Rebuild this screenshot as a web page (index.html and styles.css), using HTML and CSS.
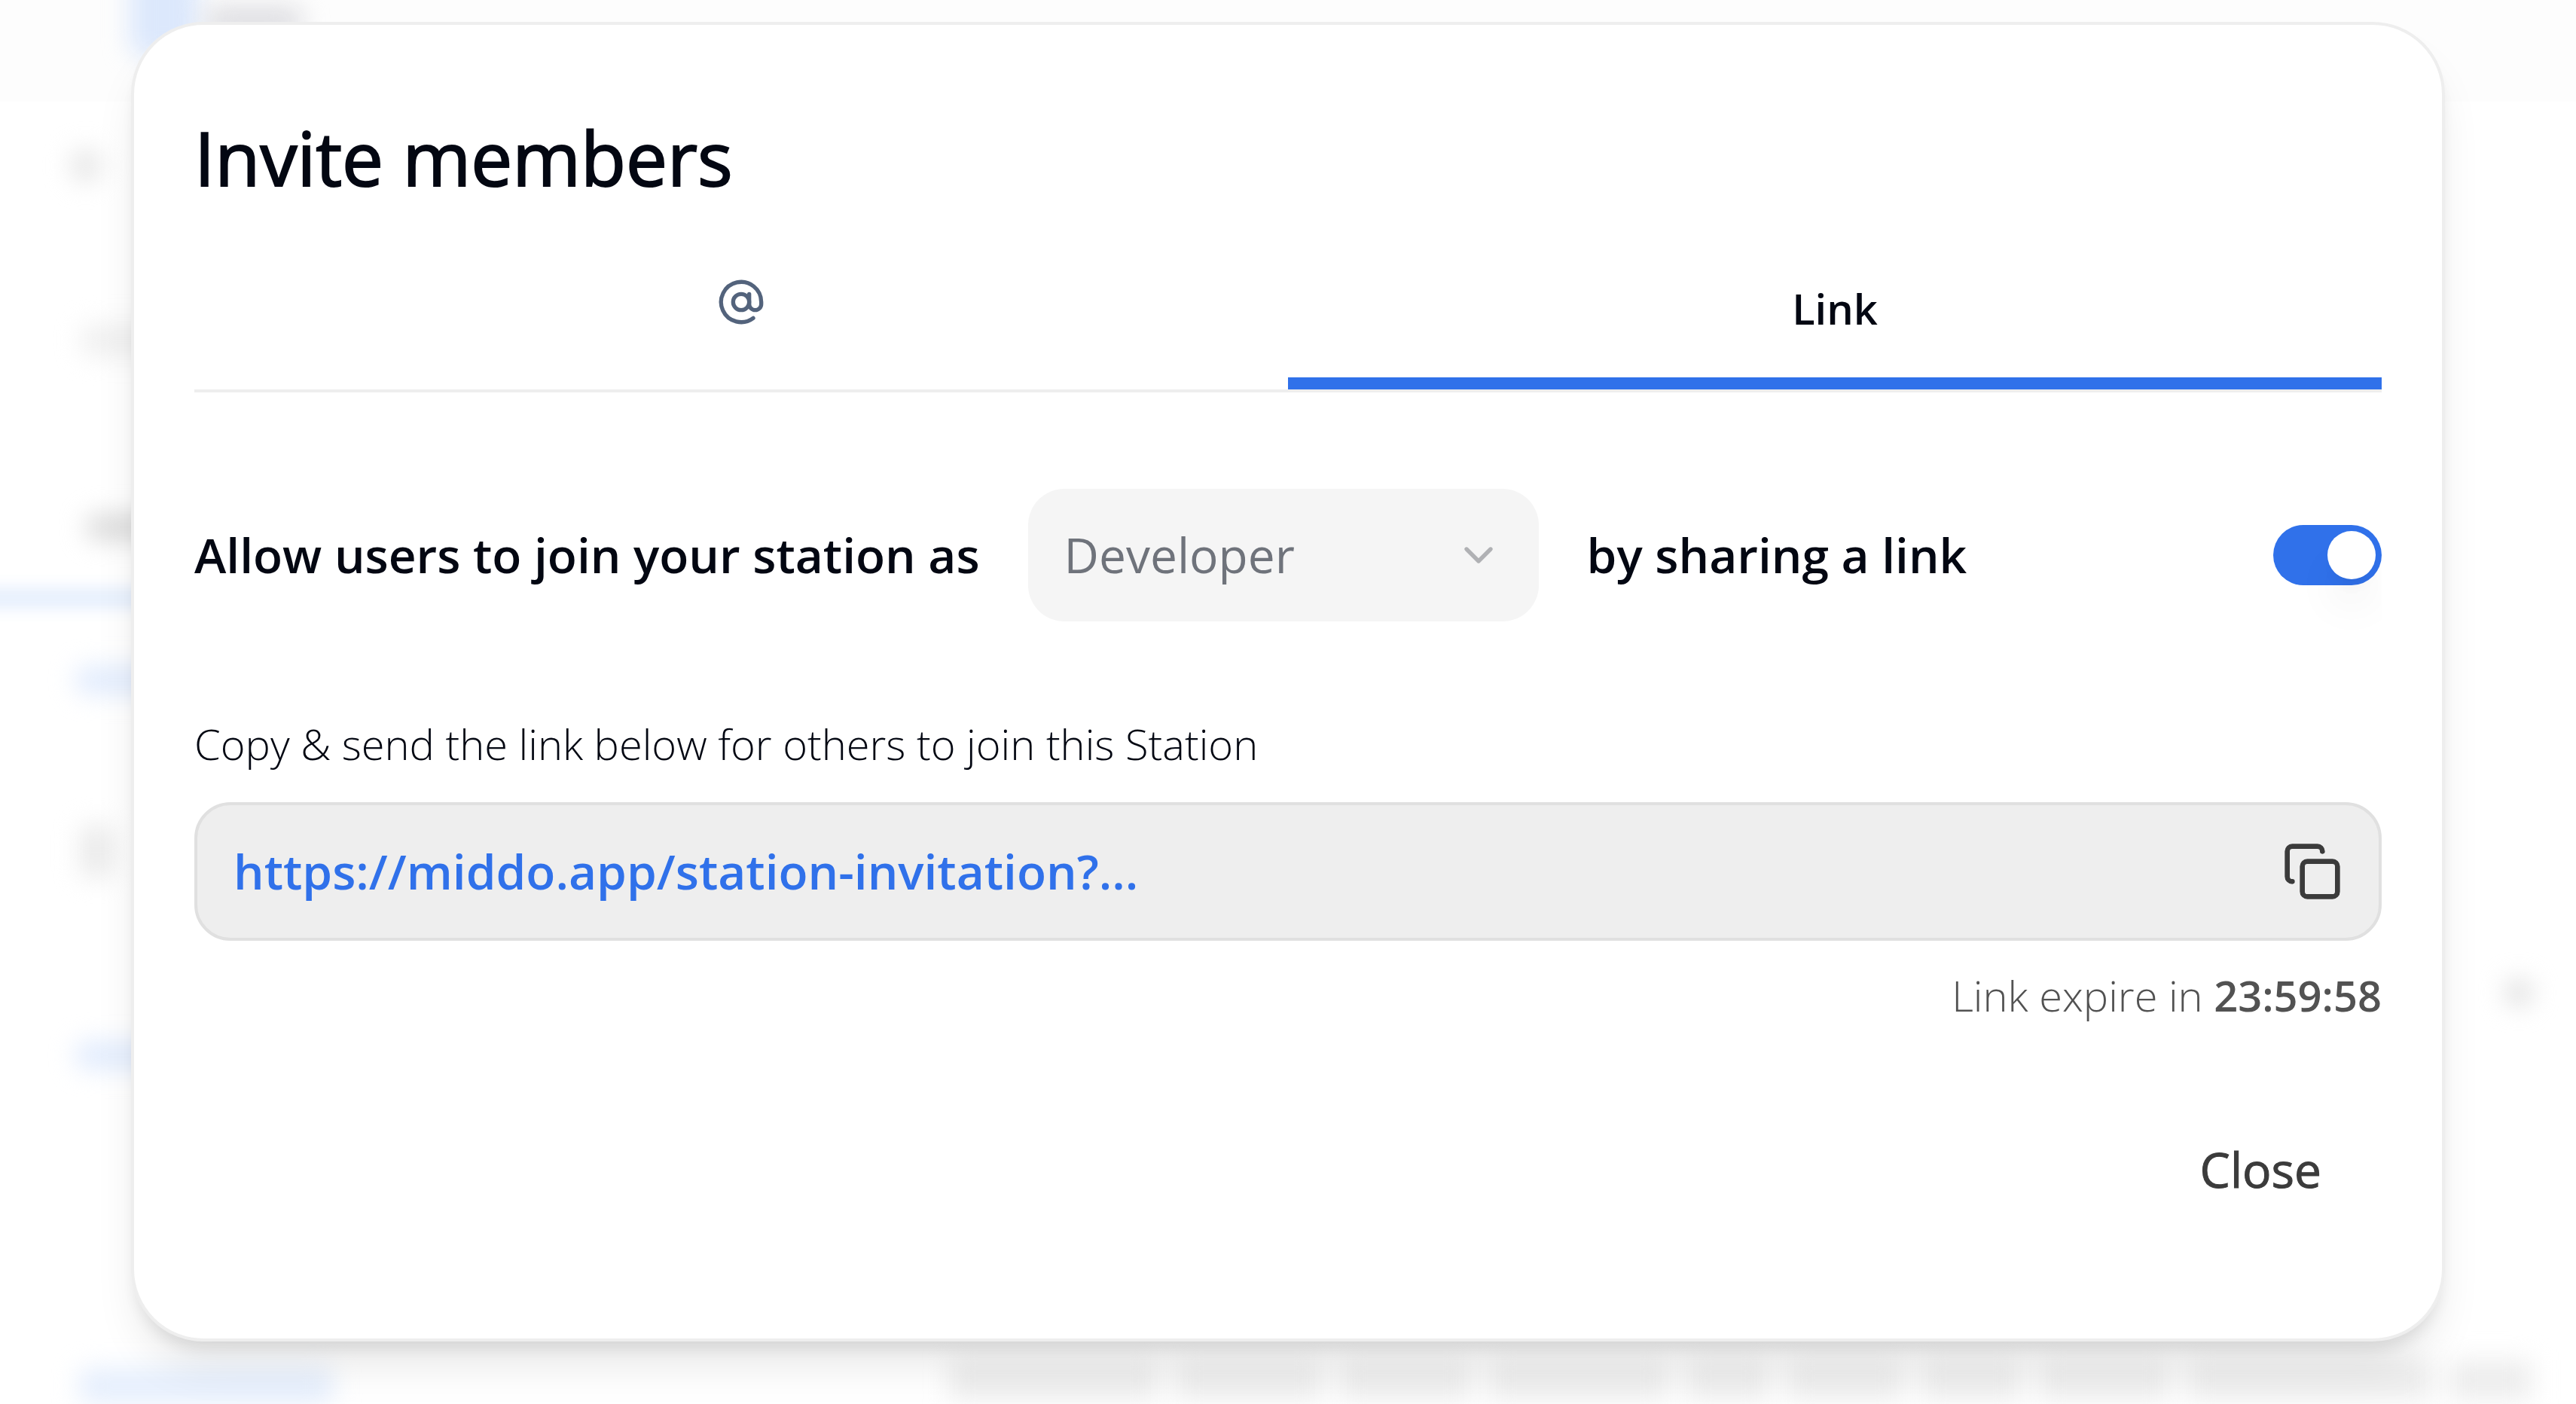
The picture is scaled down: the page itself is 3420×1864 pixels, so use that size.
FILE: index.html
```html
<!DOCTYPE html>
<html lang="en">
<head>
<meta charset="utf-8">
<meta name="viewport" content="width=device-width, initial-scale=1">
<title>Invite members</title>
<link rel="stylesheet" href="styles.css">
</head>
<body>
<div class="backdrop" aria-hidden="true">
  <span class="haze haze-header"></span>
  <span class="haze haze-logo"></span>
  <span class="haze haze-logo-text"></span>
  <span class="haze haze-back"></span>
  <span class="haze haze-search"></span>
  <span class="haze haze-tab"></span>
  <span class="haze haze-tab-line"></span>
  <span class="haze haze-link-1"></span>
  <span class="haze haze-item"></span>
  <span class="haze haze-link-2"></span>
  <span class="haze haze-link-3"></span>
  <span class="haze haze-dot"></span>
  <div class="haze-words">
    <i style="width:279px"></i><i style="width:198px"></i><i style="width:178px"></i><i style="width:242px"></i><i style="width:114px"></i><i style="width:158px"></i><i style="width:136px"></i><i style="width:178px"></i><i style="width:328px"></i><i style="width:110px"></i>
  </div>
</div>
<main class="overlay">
  <section class="dialog" role="dialog" aria-modal="true" aria-labelledby="dialog-title">
    <h1 class="title" id="dialog-title">Invite members</h1>
    <div class="tabs" role="tablist">
      <button class="tab" role="tab" type="button" aria-selected="false" aria-label="Email">
        <svg class="icon" viewBox="0 0 24 24"><circle cx="12" cy="12" r="4"/><path d="M16 8v5a3 3 0 0 0 6 0v-1a10 10 0 1 0-4 8"/></svg>
      </button>
      <button class="tab tab-active" role="tab" type="button" aria-selected="true">Link</button>
    </div>
    <div class="share">
      <label for="role">Allow users to join your station as</label>
      <div class="select">
        <select id="role" disabled><option>Developer</option></select>
        <svg class="icon chevron" viewBox="0 0 24 24"><path d="m6 9 6 6 6-6"/></svg>
      </div>
      <label for="sharing">by sharing a link</label>
      <input class="switch" id="sharing" type="checkbox" role="switch" checked>
    </div>
    <p class="hint">Copy &amp; send the link below for others to join this Station</p>
    <div class="link-box">
      <a class="link" href="#">https://middo.app/station-invitation?...</a>
      <button class="copy" type="button" aria-label="Copy link">
        <svg class="icon icon-copy" viewBox="0 0 24 24"><rect x="8" y="8" width="14" height="14" rx="2"/><path d="M4 16c-1.1 0-2-.9-2-2V4c0-1.1.9-2 2-2h10c1.1 0 2 .9 2 2"/></svg>
      </button>
    </div>
    <p class="expiry">Link expire in <time>23:59:58</time></p>
    <div class="actions">
      <button class="close" type="button">Close</button>
    </div>
  </section>
</main>
</body>
</html>
```
FILE: styles.css
```css
:root {
  --blue: #3071ea;
  --ink: #030712;
  --line: #eeeeee;
}

* { box-sizing: border-box; }

body {
  margin: 0;
  min-height: 100vh;
  background: #fff;
  color: var(--ink);
  font-family: "Open Sans", "Noto Sans", sans-serif;
  font-size: 64px;
  line-height: 96px;
}

button, select { font: inherit; }

button {
  border: 0;
  background: none;
  color: inherit;
  padding: 0;
}

h1, p { margin: 0; }

/* Blurred application behind the dialog */
.backdrop {
  position: fixed;
  inset: 0;
  overflow: hidden;
}

.haze {
  position: absolute;
  border-radius: 16px;
  filter: blur(16px);
}

.haze-header { left: 0; right: 0; top: 0; height: 135px; background: #fdfdfd; border-radius: 0; filter: none; }
.haze-logo { left: 172px; top: -40px; width: 92px; height: 114px; background: #dce8fc; }
.haze-logo-text { left: 272px; top: 8px; width: 130px; height: 40px; background: #dedee2; }
.haze-back { left: 94px; top: 198px; width: 40px; height: 44px; background: #e8e8e8; }
.haze-search { left: 108px; top: 430px; width: 120px; height: 44px; background: #f0f0f0; }
.haze-tab { left: 114px; top: 682px; width: 120px; height: 36px; background: #dcdcdc; }
.haze-tab-line { left: -40px; top: 780px; width: 400px; height: 28px; background: #e6effd; border-radius: 0; filter: blur(10px); }
.haze-link-1 { left: 100px; top: 884px; width: 160px; height: 38px; background: #e2ecfd; }
.haze-item { left: 106px; top: 1094px; width: 46px; height: 72px; background: #ebebeb; }
.haze-link-2 { left: 100px; top: 1382px; width: 160px; height: 38px; background: #e2ecfd; }
.haze-link-3 { left: 104px; top: 1816px; width: 340px; height: 48px; background: #e6effd; }
.haze-dot { left: 3326px; top: 1300px; width: 36px; height: 36px; background: #e0e0e0; }

.haze-words {
  position: absolute;
  left: 1260px;
  top: 1806px;
  display: flex;
  gap: 20px;
  filter: blur(16px);
}

.haze-words i {
  height: 52px;
  background: #ededed;
}

/* Dialog */
.overlay {
  position: relative;
  min-height: 100vh;
  padding: 29px 174px 83px;
}

.dialog {
  padding: 80px;
  border: 4px solid var(--line);
  border-radius: 96px;
  background: #fff;
  box-shadow: 0 40px 60px -12px rgba(0, 0, 0, .1), 0 16px 24px -8px rgba(0, 0, 0, .1);
}

.title {
  padding-top: 32px;
  font-size: 98px;
  font-weight: 500;
  line-height: 128px;
  -webkit-text-stroke: 2px currentColor;
}

.icon {
  display: block;
  width: 64px;
  height: 64px;
  fill: none;
  stroke: currentColor;
  stroke-width: 2;
  stroke-linecap: round;
  stroke-linejoin: round;
}

.tabs {
  display: grid;
  grid-template-columns: 1fr 1fr;
  height: 196px;
  margin-top: 52px;
  border-bottom: 4px solid var(--line);
}

.tab {
  display: flex;
  align-items: center;
  justify-content: center;
  padding-bottom: 40px;
  color: #53637c;
  font-size: 56px;
  font-weight: 600;
  line-height: 80px;
}

.tab-active {
  padding-bottom: 8px;
  border-bottom: 16px solid var(--blue);
  color: var(--ink);
}

.share {
  display: flex;
  align-items: center;
  gap: 64px;
  margin-top: 128px;
  font-weight: 600;
  overflow-x: clip;
}

.select { display: grid; flex: 0 1 678px; align-items: center; }

.select select {
  grid-area: 1 / 1;
  width: 100%;
  height: 176px;
  padding: 0 48px;
  border: 0;
  border-radius: 48px;
  appearance: none;
  background: #f5f5f5;
  color: #6f737b;
  font-weight: 400;
  opacity: 1;
}

.chevron {
  grid-area: 1 / 1;
  justify-self: end;
  margin-right: 48px;
  color: #b0b1b4;
  pointer-events: none;
}

.switch {
  display: flex;
  align-items: center;
  justify-content: flex-end;
  width: 144px;
  height: 80px;
  margin: 0 0 0 auto;
  padding: 8px;
  border-radius: 40px;
  appearance: none;
  background: var(--blue);
}

.switch::before {
  content: "";
  width: 64px;
  height: 64px;
  border-radius: 50%;
  background: #fff;
  box-shadow: 0 40px 60px -12px rgba(0, 0, 0, .1), 0 16px 24px -16px rgba(0, 0, 0, .1);
}

.switch:not(:checked) { justify-content: flex-start; background: #d4d4d4; }

.hint {
  margin-top: 122px;
  font-size: 56px;
  font-weight: 300;
  line-height: 80px;
}

.link-box {
  display: flex;
  align-items: center;
  justify-content: space-between;
  height: 184px;
  margin-top: 38px;
  padding: 0 48px;
  border: 4px solid #e0e0e0;
  border-radius: 48px;
  background: var(--line);
}

.link {
  color: var(--blue);
  font-weight: 600;
  text-decoration: none;
}

.copy { color: #3b3b3b; }

.icon-copy { width: 80px; height: 80px; }

.expiry {
  margin-top: 32px;
  color: #525252;
  font-size: 56px;
  font-weight: 300;
  line-height: 80px;
  text-align: right;
}

.expiry time { font-weight: 600; }

.actions {
  display: flex;
  justify-content: flex-end;
  margin-top: 104px;
  padding-bottom: 56px;
}

.close {
  height: 176px;
  padding: 0 80px;
  color: #3b3b3b;
  font-weight: 500;
  -webkit-text-stroke: 1px currentColor;
}
```
